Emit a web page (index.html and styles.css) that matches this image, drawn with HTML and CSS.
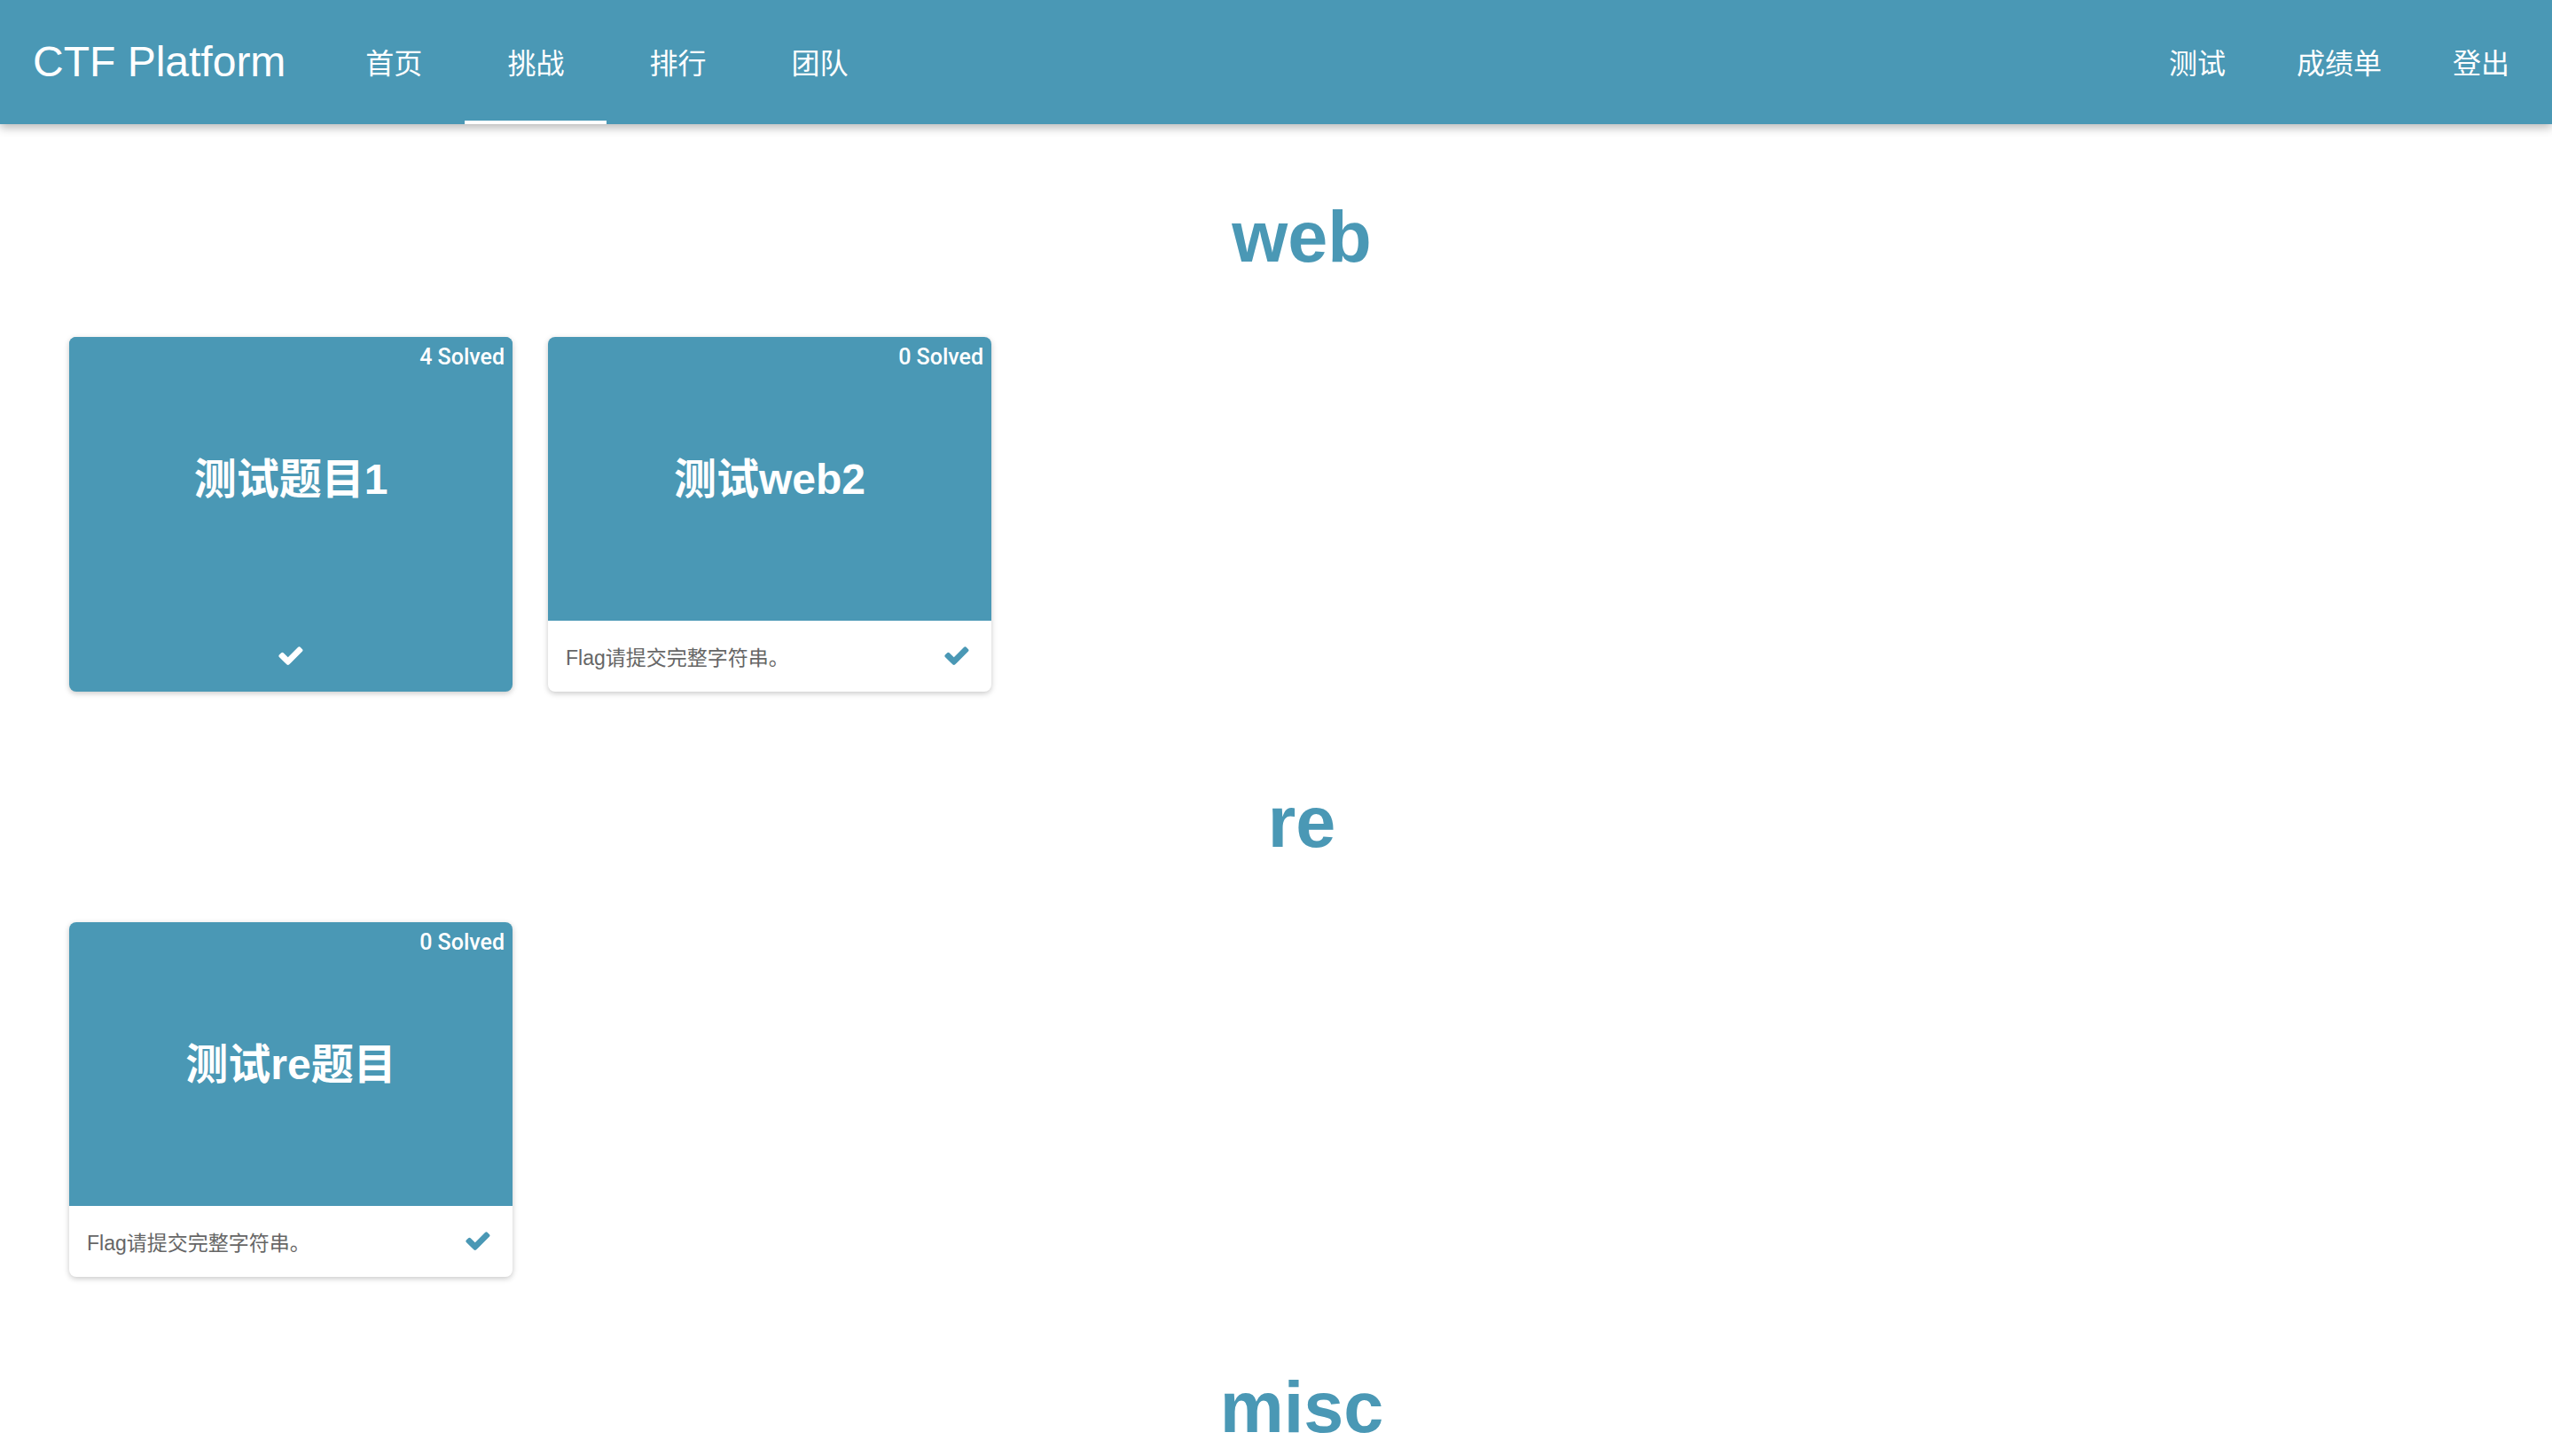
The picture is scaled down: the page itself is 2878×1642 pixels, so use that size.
FILE: index.html
```html
<!DOCTYPE html>
<html lang="zh-CN">
<head>
<meta charset="utf-8">
<title>CTF Platform</title>
<link rel="stylesheet" href="styles.css">
</head>
<body>
<nav class="navbar">
  <a class="brand" href="#">CTF Platform</a>
  <ul class="nav-left">
    <li><a href="#">首页</a></li>
    <li class="active"><a href="#">挑战</a></li>
    <li><a href="#">排行</a></li>
    <li><a href="#">团队</a></li>
  </ul>
  <ul class="nav-right">
    <li><a href="#">测试</a></li>
    <li><a href="#">成绩单</a></li>
    <li><a href="#">登出</a></li>
  </ul>
</nav>

<main class="content">
  <section class="category">
    <h2 class="category-title">web</h2>
    <div class="cards">
      <div class="card card-solved">
        <div class="card-top">
          <span class="solves">4 Solved</span>
          <span class="card-title">测试题目1</span>
        </div>
        <div class="card-foot">
          <svg class="check" viewBox="100 340 1600 1210"><path d="M1671 566q0 40-28 68l-724 724-136 136q-28 28-68 28t-68-28l-136-136-362-362q-28-28-28-68t28-68l136-136q28-28 68-28t68 28l294 295 656-657q28-28 68-28t68 28l136 136q28 28 28 68z"/></svg>
        </div>
      </div>
      <div class="card">
        <div class="card-top">
          <span class="solves">0 Solved</span>
          <span class="card-title">测试web2</span>
        </div>
        <div class="card-foot">
          <span class="desc">Flag请提交完整字符串。</span>
          <svg class="check" viewBox="100 340 1600 1210"><path d="M1671 566q0 40-28 68l-724 724-136 136q-28 28-68 28t-68-28l-136-136-362-362q-28-28-28-68t28-68l136-136q28-28 68-28t68 28l294 295 656-657q28-28 68-28t68 28l136 136q28 28 28 68z"/></svg>
        </div>
      </div>
    </div>
  </section>

  <section class="category">
    <h2 class="category-title">re</h2>
    <div class="cards">
      <div class="card">
        <div class="card-top">
          <span class="solves">0 Solved</span>
          <span class="card-title">测试re题目</span>
        </div>
        <div class="card-foot">
          <span class="desc">Flag请提交完整字符串。</span>
          <svg class="check" viewBox="100 340 1600 1210"><path d="M1671 566q0 40-28 68l-724 724-136 136q-28 28-68 28t-68-28l-136-136-362-362q-28-28-28-68t28-68l136-136q28-28 68-28t68 28l294 295 656-657q28-28 68-28t68 28l136 136q28 28 28 68z"/></svg>
        </div>
      </div>
    </div>
  </section>

  <section class="category">
    <h2 class="category-title">misc</h2>
  </section>
</main>
</body>
</html>
```

FILE: styles.css
```css
* { box-sizing: border-box; }

html, body {
  margin: 0;
  padding: 0;
  background: #ffffff;
  font-family: "Liberation Sans", "Noto Sans CJK SC", sans-serif;
}

a { text-decoration: none; color: inherit; }

.navbar {
  display: flex;
  align-items: stretch;
  height: 140px;
  background: #4a98b5;
  color: #ffffff;
  padding: 0 8px 0 37px;
  box-shadow: 0 4px 10px rgba(0, 0, 0, 0.28);
  position: relative;
  z-index: 2;
}

.brand {
  display: flex;
  align-items: center;
  font-family: "Liberation Sans", sans-serif;
  font-size: 48px;
  margin-right: 42px;
  padding-bottom: 2px;
}

.nav-left, .nav-right {
  list-style: none;
  margin: 0;
  padding: 0;
  display: flex;
}

.nav-right { margin-left: auto; }

.nav-left li, .nav-right li {
  display: flex;
  position: relative;
}

.nav-left a, .nav-right a {
  display: flex;
  align-items: center;
  font-family: "Noto Sans CJK SC", sans-serif;
  font-size: 32px;
  padding-bottom: 2px;
}

.nav-left a { padding-left: 48px; padding-right: 48px; }
.nav-right a { padding-left: 40px; padding-right: 40px; }

.nav-left li.active::after {
  content: "";
  position: absolute;
  left: 0;
  right: 0;
  bottom: 0;
  height: 4px;
  background: #ffffff;
}

.content {
  padding: 83px 20px 0 78px;
}

.category {
  margin-bottom: 103px;
}

.category-title {
  margin: 0 0 69px 0;
  text-align: center;
  font-family: "Liberation Sans", sans-serif;
  font-weight: bold;
  font-size: 81px;
  line-height: 88px;
  color: #4a98b5;
}

.cards {
  display: flex;
  gap: 40px;
}

.card {
  width: 500px;
  height: 400px;
  border-radius: 8px;
  overflow: hidden;
  background: #ffffff;
  box-shadow: 0 2px 6px rgba(0, 0, 0, 0.22);
  display: flex;
  flex-direction: column;
}

.card-top {
  position: relative;
  height: 320px;
  background: #4a98b5;
  display: flex;
  align-items: center;
  justify-content: center;
  color: #ffffff;
}

.solves {
  position: absolute;
  top: 8px;
  right: 9px;
  font-family: "Roboto", "Liberation Sans", sans-serif;
  font-weight: 500;
  font-size: 25px;
  line-height: 30px;
}

.card-title {
  font-family: "Liberation Sans", "Noto Sans CJK SC", sans-serif;
  font-weight: bold;
  font-size: 48px;
  line-height: 60px;
  margin-top: 2px;
}

.card-foot {
  height: 80px;
  display: flex;
  align-items: center;
  justify-content: space-between;
  padding: 0 25px 0 20px;
}

.desc {
  font-family: "Liberation Sans", "Noto Sans CJK SC", sans-serif;
  font-size: 23px;
  color: #666666;
}

.check {
  width: 28px;
  height: 22px;
  fill: #4a98b5;
}

.card-solved { background: #4a98b5; }

.card-solved .card-foot {
  justify-content: center;
  padding: 0;
}

.card-solved .check { fill: #ffffff; }
```
